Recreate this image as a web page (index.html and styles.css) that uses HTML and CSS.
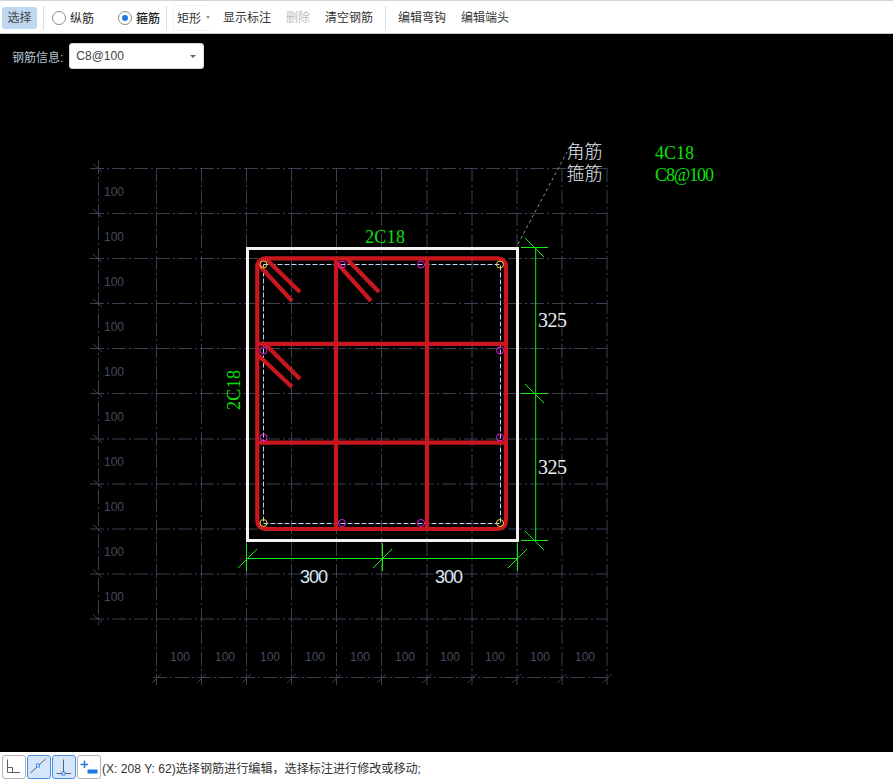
FILE: index.html
```html
<!DOCTYPE html>
<html lang="zh-CN">
<head>
<meta charset="utf-8">
<title>钢筋编辑</title>
<link rel="stylesheet" href="styles.css">
</head>
<body>
<div class="app">
  <header class="toolbar">
    <button class="tool tool-active">选择</button>
    <span class="divider div-a"></span>
    <label class="radio radio-first"><span class="circle"></span>纵筋</label>
    <label class="radio radio-second"><span class="circle circle-on"></span><b>箍筋</b></label>
    <span class="divider div-b"></span>
    <span class="shape">矩形<span class="caret"></span></span>
    <button class="tool tool-show">显示标注</button>
    <button class="tool tool-off">删除</button>
    <button class="tool tool-clear">清空钢筋</button>
    <span class="divider div-c"></span>
    <button class="tool tool-hook">编辑弯钩</button>
    <button class="tool tool-end">编辑端头</button>
  </header>

  <main class="canvas">
    <div class="info">
      <span class="info-label">钢筋信息:</span>
      <div class="select">C8@100<span class="caret caret-dark"></span></div>
    </div>
    <svg class="drawing" width="893" height="718" viewBox="0 34 893 718" xmlns="http://www.w3.org/2000/svg">
      <g class="grid">
        <path d="M90 168.5H607M90 213.5H607M90 258.5H607M90 303.5H607M90 348.5H607M90 393.5H607M90 439H607M90 484H607M90 529H607M90 574H607M90 619H607"/>
        <path d="M98.5 160V625M156.5 168V685M201.5 168V685M246.5 168V685M291.5 168V685M336.5 168V685M381.5 168V685M427 168V685M472 168V685M517 168V685M562 168V685M607 168V685"/>
        <path d="M153 677.5H607"/>
      </g>
      <path class="grid-tick" d="M93 164l9 8M93 209l9 8M93 254l9 8M93 299l9 8M93 344l9 8M93 389l9 8M93 434.500l9 8M93 479.500l9 8M93 524.500l9 8M93 569.500l9 8M93 614.500l9 8M152 683l9-9M197 683l9-9M242 683l9-9M287 683l9-9M332 683l9-9M377 683l9-9M422.500 683l9-9M467.500 683l9-9M512.500 683l9-9M557.500 683l9-9M602.500 683l9-9"/>
      <g class="grid-label">
        <text x="104" y="196">100</text><text x="104" y="241">100</text><text x="104" y="286">100</text><text x="104" y="331">100</text><text x="104" y="376">100</text><text x="104" y="421">100</text><text x="104" y="466">100</text><text x="104" y="511">100</text><text x="104" y="556">100</text><text x="104" y="601">100</text>
        <text x="170" y="661">100</text><text x="215" y="661">100</text><text x="260" y="661">100</text><text x="305" y="661">100</text><text x="350" y="661">100</text><text x="395" y="661">100</text><text x="440" y="661">100</text><text x="485" y="661">100</text><text x="530" y="661">100</text><text x="575" y="661">100</text>
      </g>

      <path class="leader" d="M518 244L567 152"/>
      <rect class="section" x="247.500" y="248.500" width="270" height="292"/>
      <rect class="stirrup-line" x="263.500" y="264.500" width="237" height="259"/>

      <g class="rebar">
        <rect x="257.300" y="258.300" width="248.700" height="270.700" rx="8"/>
        <path d="M336 258V529M427 258V529M257 343.800H506M257 442.700H506"/>
        <path d="M257 263L292 301M265 258L300 292M337 263L371 301M346 258L379 292M258 355L292 387M265 344L300 379"/>
      </g>

      <g class="bar-corner">
        <circle cx="263.500" cy="264.500" r="3.500"/><circle cx="500" cy="264.500" r="3.500"/><circle cx="263.500" cy="523" r="3.500"/><circle cx="500" cy="523" r="3.500"/>
      </g>
      <g class="bar-edge">
        <circle cx="342" cy="264.500" r="3.500"/><circle cx="421" cy="264.500" r="3.500"/><circle cx="263.500" cy="350.500" r="3.500"/><circle cx="500" cy="350.500" r="3.500"/><circle cx="263.500" cy="437.500" r="3.500"/><circle cx="500" cy="437.500" r="3.500"/><circle cx="342" cy="523" r="3.500"/><circle cx="421" cy="523" r="3.500"/>
      </g>

      <path class="dim" d="M535.700 247V540M521 247.500H548M521 393.500H548M521 540.500H548M525 238l19 19M525 384l19 19M525 531l19 19"/>
      <path class="dim" d="M246.500 558.500H517.500M246.500 543V571M382.500 543V571M517.500 543V571M238 568l19-19M373 568l19-19M508 568l19-19"/>

      <g class="label-green">
        <text x="365" y="243" textLength="40">2C18</text>
        <text class="label-side" transform="translate(240 410) rotate(-90)" textLength="40">2C18</text>
        <text x="655" y="159" textLength="39">4C18</text>
        <text x="655" y="181" textLength="59">C8@100</text>
      </g>
      <g class="label-white">
        <text x="538" y="327" textLength="29">325</text>
        <text x="538" y="474" textLength="29">325</text>
      </g>
      <g class="label-sans">
        <text x="300" y="583" textLength="28">300</text>
        <text x="435" y="583" textLength="28">300</text>
      </g>
      <g class="label-cjk">
        <text x="566.500" y="158">角筋</text>
        <text x="566.500" y="180">箍筋</text>
      </g>
    </svg>
  </main>

  <footer class="statusbar">
    <button class="snap">
      <svg width="22" height="22" viewBox="0 0 22 22"><path class="snap-line" d="M4.500 3.500V16.500H17M4.500 11.500H9.500V16.500"/></svg>
    </button>
    <button class="snap snap-on">
      <svg width="22" height="22" viewBox="0 0 22 22"><path class="snap-line" d="M2.500 17L17.500 3"/><rect class="snap-node" x="8.500" y="8" width="3" height="3"/></svg>
    </button>
    <button class="snap snap-on">
      <svg width="22" height="22" viewBox="0 0 22 22"><path class="snap-line" d="M10.500 3.500V17M3.500 17.500H18"/><rect class="snap-node" x="9" y="16" width="3" height="3"/></svg>
    </button>
    <button class="snap">
      <svg width="22" height="22" viewBox="0 0 22 22"><path class="snap-plus" d="M2.500 8.500H10M6.500 4.500V12"/><rect class="snap-bar" x="9.500" y="13.500" width="10" height="4"/></svg>
    </button>
    <span class="status-text">(X: 208 Y: 62)选择钢筋进行编辑，选择标注进行修改或移动;</span>
  </footer>
</div>
</body>
</html>
```
FILE: styles.css
```css
* { box-sizing: border-box; }
html, body { margin: 0; padding: 0; height: 100%; background: #000; }
body { font-family: "Liberation Sans", "Noto Sans CJK SC", sans-serif; font-size: 12px; color: #333; overflow: hidden; }
.app { display: flex; flex-direction: column; width: 893px; height: 782px; }

.toolbar { display: flex; align-items: center; height: 34px; flex: none; padding-top: 1px; background: #fff; border-top: 1px solid #d4d4d4; border-bottom: 1px solid #c8c8c8; color: #333; }
.tool { font: inherit; color: inherit; background: none; border: 0; padding: 0; height: 22px; line-height: 22px; border-radius: 3px; white-space: nowrap; }
.tool-active { margin-left: 2px; width: 35px; background: #bfd8f2; color: #444; }
.tool-show { margin-left: 10px; }
.tool-off { margin-left: 15px; color: #bdbdbd; }
.tool-clear { margin-left: 15px; }
.tool-hook { margin-left: 12px; }
.tool-end { margin-left: 15px; }
.divider { width: 1px; height: 24px; background: #dcdcdc; flex: none; }
.div-a { margin-left: 6px; }
.div-b { margin-left: 6px; }
.div-c { margin-left: 12px; }
.radio { display: flex; align-items: center; gap: 4px; color: #222; }
.radio b { font-weight: 500; }
.radio-first { margin-left: 8px; }
.radio-second { margin-left: 24px; }
.circle { width: 14px; height: 14px; border: 1px solid #8c8c8c; border-radius: 50%; background: #fff; display: flex; align-items: center; justify-content: center; flex: none; }
.circle-on::after { content: ""; width: 6px; height: 6px; border-radius: 50%; background: #1f7ae0; }
.shape { display: flex; align-items: center; margin-left: 6px; padding-left: 3px; width: 40px; height: 26px; border: 1px solid #f4f4f4; border-right: 0; border-radius: 3px; }
.caret { display: block; width: 0; height: 0; margin-left: 5px; border: 2.500px solid transparent; border-top: 3px solid #999; border-bottom: 0; }

.canvas { position: relative; flex: 1 1 auto; min-height: 0; background: #000; overflow: hidden; }
.drawing { display: block; }
.info { position: absolute; left: 12px; top: 9px; display: flex; align-items: center; gap: 6px; z-index: 1; }
.info-label { color: #b9c6d4; }
.select { display: flex; align-items: center; justify-content: space-between; width: 135px; height: 26px; padding: 0 6px; background: #fff; border: 1px solid #d9d9d9; border-radius: 3px; color: #444; font-size: 12px; }
.caret-dark { margin: 0 1px 0 0; border-top-color: #666; border-width: 3px; border-top-width: 3px; border-bottom: 0; }

.grid path { fill: none; stroke: #394152; stroke-width: 1; stroke-dasharray: 14 3 2 3; }
.grid-tick { fill: none; stroke: #394152; stroke-width: 1; }
.grid-label text { font-family: "Liberation Sans", sans-serif; font-size: 12px; fill: #434b5c; }
.leader { fill: none; stroke: #8f8f8f; stroke-width: 1; stroke-dasharray: 3 3; }
.section { fill: none; stroke: #f2f2f2; stroke-width: 3; }
.stirrup-line { fill: none; stroke: #bdd6f2; stroke-width: 1; stroke-dasharray: 5 2; }
.rebar rect, .rebar path { fill: none; stroke: #c8171f; stroke-width: 4.200; }
.bar-corner circle { fill: none; stroke: #f2d23a; stroke-width: 1; }
.bar-edge circle { fill: none; stroke: #e61ee6; stroke-width: 1; }
.dim { fill: none; stroke: #12f012; stroke-width: 1; }
.label-green text { font-family: "Liberation Serif", serif; font-size: 18px; fill: #0be00b; }
.label-white text { font-family: "Liberation Serif", serif; font-size: 20px; fill: #e9eef5; }
.label-sans text { font-family: "Liberation Sans", sans-serif; font-size: 18px; fill: #dfe9f7; }
.label-cjk text { font-family: "Noto Sans CJK SC", sans-serif; font-size: 18px; font-weight: 300; fill: #e3e9f0; }

.statusbar { display: flex; align-items: center; gap: 1px; height: 30px; flex: none; padding: 0 0 0 2px; background: #fff; }
.snap { display: flex; align-items: center; justify-content: center; width: 24px; height: 24px; padding: 0; background: #fff; border: 1px solid #b5b5b5; border-radius: 3px; }
.snap-on { background: #d5e5fa; border-color: #4a90e2; }
.snap-line { fill: none; stroke: #5a5f68; stroke-width: 1; }
.snap-node { fill: #d5e5fa; stroke: #4a90e2; stroke-width: 1; }
.snap-plus { fill: none; stroke: #1f7ae0; stroke-width: 1.500; }
.snap-bar { fill: #1f7ae0; }
.status-text { font-size: 12.100px; color: #333; white-space: nowrap; }
```
